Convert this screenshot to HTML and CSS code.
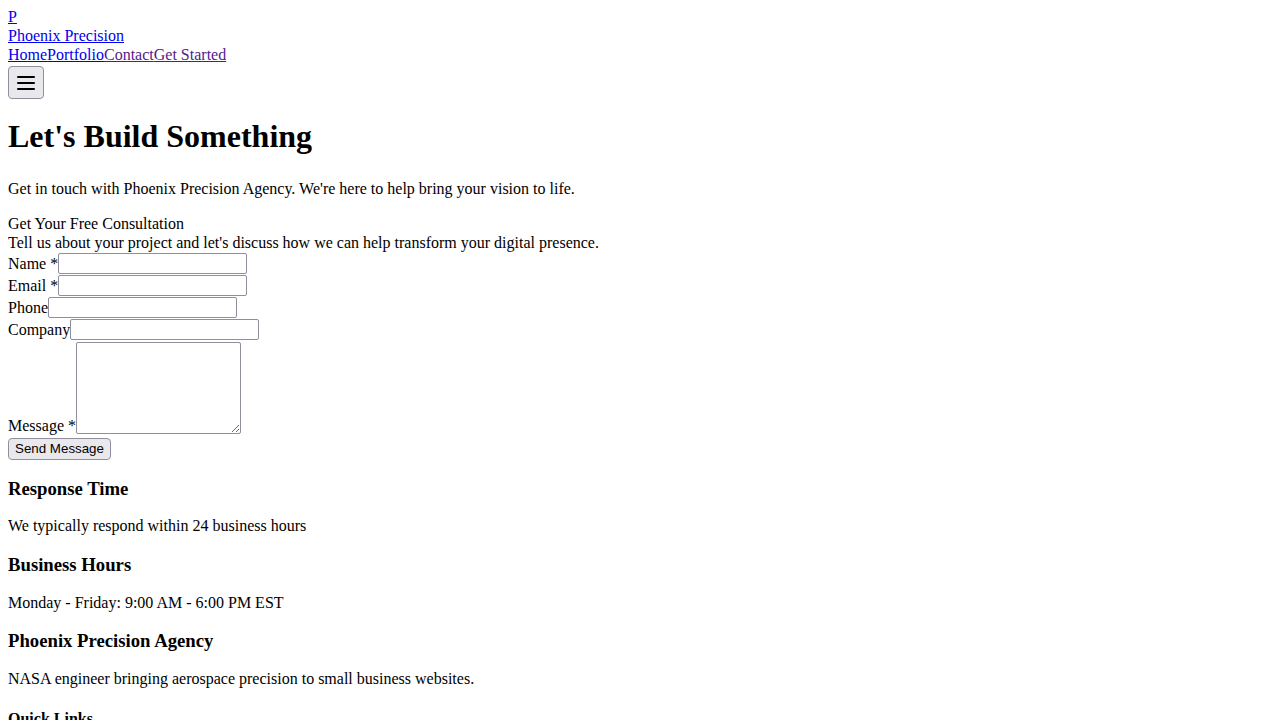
FILE: index.html
```html
<!DOCTYPE html>
<html lang="en">
<head>
<meta charset="utf-8">
<title>Contact - Phoenix Precision</title>
<link rel="stylesheet" href="styles.css">
</head>
<body class="page">
<header class="site-header">
  <div class="ln"><a class="link" href="#">P</a></div>
  <div class="ln"><a class="link" href="#">Phoenix Precision</a></div>
  <nav class="ln"><a class="link" href="#">Home</a><a class="link" href="#">Portfolio</a><a class="link visited" href="#">Contact</a><a class="link visited" href="#">Get Started</a></nav>
  <button class="menu-btn" type="button" aria-label="Menu"><svg class="menu-icon" width="24" height="24" viewBox="0 0 24 24" fill="none" stroke="currentColor" stroke-width="2" stroke-linecap="round" stroke-linejoin="round"><line x1="4" y1="12" x2="20" y2="12"/><line x1="4" y1="6" x2="20" y2="6"/><line x1="4" y1="18" x2="20" y2="18"/></svg></button>
</header>
<main>
  <section class="hero">
    <h1 class="title">Let's Build Something</h1>
    <p class="para ln">Get in touch with Phoenix Precision Agency. We're here to help bring your vision to life.</p>
  </section>
  <section class="card">
    <div class="ln">Get Your Free Consultation</div>
    <div class="ln">Tell us about your project and let's discuss how we can help transform your digital presence.</div>
    <form class="form">
      <div class="field"><label>Name *</label><input class="input" type="text"></div>
      <div class="field"><label>Email *</label><input class="input" type="email"></div>
      <div class="field"><label>Phone</label><input class="input" type="tel"></div>
      <div class="field"><label>Company</label><input class="input" type="text"></div>
      <div class="field-msg"><label class="msg-label">Message *</label><textarea class="textarea"></textarea></div>
      <button class="send-btn" type="button">Send Message</button>
    </form>
  </section>
  <section class="info">
    <h3 class="sub">Response Time</h3>
    <p class="para ln">We typically respond within 24 business hours</p>
    <h3 class="sub">Business Hours</h3>
    <p class="para ln">Monday - Friday: 9:00 AM - 6:00 PM EST</p>
  </section>
</main>
<footer class="footer">
  <h3 class="sub">Phoenix Precision Agency</h3>
  <p class="para ln">NASA engineer bringing aerospace precision to small business websites.</p>
  <h4 class="sub4 ln">Quick Links</h4>
</footer>
</body>
</html>
```
FILE: styles.css
```css
.page {
  margin: 8px;
  font-family: "Liberation Serif", "Times New Roman", serif;
  font-size: 16px;
  line-height: 19px;
  color: #000;
  background: #fff;
}
.ln { line-height: 17px; padding-bottom: 2px; }
.link { color: #0000ee; text-decoration: underline; }
.link.visited { color: #551a8b; }
.menu-btn {
  display: block;
  box-sizing: border-box;
  margin: 1px 0 0;
  padding: 1px 5px;
  width: 36px;
  height: 33px;
  border: 1px solid #8f8f9d;
  border-radius: 4px;
  background: #e9e9ed;
  color: #000;
}
.menu-icon { display: block; }
.title {
  font-size: 32px;
  font-weight: bold;
  line-height: 33px;
  padding-bottom: 5px;
  margin: 21.44px 0;
}
.para { margin: 16px 0; }
.hero .para { margin-top: 21.44px; }
.sub {
  font-size: 18.72px;
  font-weight: bold;
  line-height: 19px;
  padding-bottom: 1px;
  margin: 18.72px 0;
}
.sub4 { font-size: 16px; font-weight: bold; margin: 21.28px 0; }
.card { margin: 0; }
.form { margin: 0; }
.field { line-height: 22px; height: 22px; }
.input {
  box-sizing: border-box;
  width: 189px;
  height: 21px;
  margin: 0;
  padding: 1px 2px;
  border: 1px solid #8f8f9d;
  border-radius: 2px;
  background: #fff;
  vertical-align: top;
  font: 13.33px "Liberation Sans", Arial, sans-serif;
}
.field-msg {
  display: flex;
  align-items: flex-end;
  padding-bottom: 4px;
}
.msg-label { line-height: 17px; }
.textarea {
  box-sizing: border-box;
  width: 165px;
  height: 92px;
  margin: 1px 0 0;
  padding: 2px;
  border: 1px solid #8f8f9d;
  border-radius: 2px;
  resize: both;
  font: 13.33px "Liberation Mono", monospace;
}
.send-btn {
  display: block;
  box-sizing: border-box;
  width: 103px;
  height: 22px;
  margin: 0;
  padding: 1px 6px;
  border: 1px solid #8f8f9d;
  border-radius: 4px;
  background: #e9e9ed;
  color: #000;
  font: 13.33px "Liberation Sans", Arial, sans-serif;
}
```
